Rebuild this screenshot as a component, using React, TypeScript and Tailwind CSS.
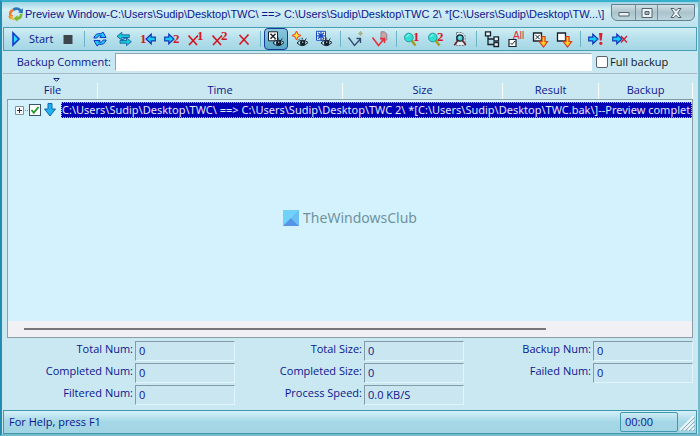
import type { ReactNode } from 'react';
import clsx from 'clsx';

interface ToolButtonProps {
  label: string;
  active?: boolean;
  children: ReactNode;
}

const ToolButton = ({ label, active, children }: ToolButtonProps) => (
  <button
    type="button"
    aria-label={label}
    aria-pressed={active}
    className={clsx(
      'flex h-[22px] w-6 shrink-0 items-center justify-center rounded-sm border',
      active ? 'border-[#123c9c] bg-linear-to-b from-[#8cc6dc] to-[#5aa9c6]' : 'border-transparent'
    )}
  >
    <svg viewBox="0 0 16 16" className="h-4 w-4 shrink-0 overflow-visible" fill="none">
      {children}
    </svg>
  </button>
);

const Separator = () => (
  <div className="flex w-2 shrink-0 justify-center">
    <div className="h-4 w-px bg-[#6db3c6]" />
  </div>
);

const RightArrow = () => (
  <path d="M.7 6.2h4.1V3.2L10 8l-5.2 4.8v-3H.7Z" fill="#19cdf5" stroke="#1239b8" strokeWidth="1.2" />
);

const LeftArrow = () => (
  <path d="M15.3 6.2h-4.1V3.2L6 8l5.2 4.8v-3h4.1Z" fill="#19cdf5" stroke="#1239b8" strokeWidth="1.2" />
);

const Digit = ({ x, y, children }: { x: number; y: number; children: string }) => (
  <text x={x} y={y} fontSize="13" fontWeight="700" fontFamily="Liberation Serif, serif" fill="#d41822">
    {children}
  </text>
);

const Cross = () => <path d="M.5 4.5 9 14M10 4.5 1 14" stroke="#cf1822" strokeWidth="1.7" />;

const Eye = () => (
  <>
    <path d="M5 12Q10 6.5 16 11.5Q10.5 17.5 5 12Z" fill="#bfe1eb" stroke="#12202d" />
    <circle cx="10.7" cy="12" r="2.7" fill="#12202d" />
    <path d="M10 11.2h1.3" stroke="#d5eef5" />
    <path d="m6 9.5 2-2M10.2 8.3V6.5M13.3 9l1-1.7" stroke="#12202d" strokeWidth=".8" />
  </>
);

const Magnifier = () => (
  <>
    <path d="m7.5 9.5 4 5" stroke="#a19b20" strokeWidth="2.4" />
    <circle cx="4.8" cy="6.5" r="4.3" fill="#31dfd0" stroke="#279ba4" />
    <path d="M2.5 6Q3.2 3.7 5.5 3.8" stroke="#b1fff1" />
  </>
);

const DownArrow = () => (
  <path d="M10 5.5h3v5h2.5L11.5 16 7.3 10.5H10Z" fill="#ffd51c" stroke="#df391b" strokeWidth="1.2" />
);

const Toolbar = () => (
  <div
    role="toolbar"
    className="flex h-6 shrink-0 items-center overflow-hidden border border-[#4a9eb4] bg-linear-to-b from-[#d0eef5] via-[#b5dfeb] via-50% to-[#a4d6e4] pl-1"
  >
    <button type="button" className="flex h-5 w-12 shrink-0 items-center gap-[5px]">
      <svg viewBox="0 0 16 16" className="h-4 w-4 shrink-0" fill="none">
        <path d="M5 2v12l6-6Z" fill="#28dcff" stroke="#1239c9" strokeWidth="1.6" />
      </svg>
      Start
    </button>
    <ToolButton label="Stop">
      <path d="M3.5 4h9v9h-9Z" fill="#3e464b" />
    </ToolButton>
    <Separator />
    <ToolButton label="Synchronize">
      <path d="M1.8 7Q3.5 1.8 9 2.7l2-1.7L14 6.5H8l1.3-1.7Q6 4 4.7 7Z" fill="#20c9f2" stroke="#1239c9" />
      <path d="M14.2 9Q12.5 14.2 7 13.3l-2 1.7L2 9.5h6l-1.3 1.7Q10 12 11.3 9Z" fill="#20c9f2" stroke="#1239c9" />
    </ToolButton>
    <ToolButton label="Compare both ways">
      <path d="M1 5.3 5.8 1.3v2.5h7.5v2.7H5.8v2.7Z" fill="#16c8cf" stroke="#1764ad" strokeWidth=".9" />
      <path d="m15.3 10.7-4.8 4v-2.5H4V9.5h6.5V6.8Z" fill="#16c8cf" stroke="#1764ad" strokeWidth=".9" />
      <path d="m5.5 9.3 5-2.8" stroke="#1764ad" strokeWidth="1.2" />
    </ToolButton>
    <ToolButton label="Copy to left">
      <LeftArrow />
      <Digit x={0} y={12}>1</Digit>
    </ToolButton>
    <ToolButton label="Copy to right">
      <RightArrow />
      <Digit x={9} y={12}>2</Digit>
    </ToolButton>
    <ToolButton label="Delete left">
      <Cross />
      <Digit x={9} y={9}>1</Digit>
    </ToolButton>
    <ToolButton label="Delete right">
      <Cross />
      <Digit x={9} y={9}>2</Digit>
    </ToolButton>
    <ToolButton label="Skip item">
      <path d="m3.5 4 9 9.5M12.5 3.5 3.5 13.5" stroke="#cf1822" strokeWidth="1.6" />
    </ToolButton>
    <Separator />
    <ToolButton label="Show unchecked" active>
      <path d="M.5.8h9v9h-9Z" fill="#fff" stroke="#17202b" />
      <path d="m2.5 2.8 5 5M7.5 2.8l-5 5" stroke="#17202b" strokeWidth="1.4" />
      <Eye />
    </ToolButton>
    <ToolButton label="Show new">
      <path d="m4.5 0 1.4 3.1L9 4.5 5.9 5.9 4.5 9 3.1 5.9 0 4.5l3.1-1.4Z" fill="#ffe13b" stroke="#ee3d17" />
      <Eye />
    </ToolButton>
    <ToolButton label="Show same">
      <path d="M.5.3h9v9h-9Z" fill="#fff" stroke="#174bc2" />
      <path d="M5 .5v8.7M.5 4.8h9M2 1.8l6 6M8 1.8l-6 6" stroke="#174bc2" strokeWidth="1.3" />
      <Eye />
    </ToolButton>
    <Separator />
    <ToolButton label="Next new">
      <path d="m.5 6.5 6 8 6-6.5M8.5 7.5h4v4.5" stroke="#314b70" strokeWidth="1.3" />
      <path d="M12.5 0v5M10 2.5h5M10.8.8l3.4 3.4M14.2.8l-3.4 3.4" stroke="#a9a67f" strokeWidth=".8" />
    </ToolButton>
    <ToolButton label="Next file">
      <path d="M9 .8h3.5l2.3 2.3V9H9Z" fill="#c9a3a8" stroke="#93838c" />
      <path d="m.5 6.5 6 8 5.5-6.5M8 7.5h4.5V12" stroke="#e92e3a" strokeWidth="1.6" />
    </ToolButton>
    <Separator />
    <ToolButton label="Find in left">
      <Magnifier />
      <Digit x={9} y={10}>1</Digit>
    </ToolButton>
    <ToolButton label="Find in right">
      <Magnifier />
      <Digit x={9} y={10}>2</Digit>
    </ToolButton>
    <ToolButton label="Find file">
      <path d="M4.5 1.5H10l3 3v10H4.5Z" fill="#e5edf0" stroke="#647c89" strokeDasharray="2 1" />
      <circle cx="8" cy="7" r="3.2" fill="#4bcdd5" stroke="#17202b" strokeWidth="1.3" />
      <path d="m5.8 9.5-3.5 4.7M10.5 9.5l3.3 4.5" stroke="#6a2228" strokeWidth="1.6" />
      <path d="M7 6.2h1.3" stroke="#e8ffff" />
    </ToolButton>
    <Separator />
    <ToolButton label="Tree view">
      <path d="M4 4.5v9h6M4 8h6" stroke="#17202b" strokeWidth="1.3" />
      <path d="M1.5.8h5v4h-5ZM10 5.8h4.5v4H10ZM10 11.5h4.5v4H10Z" fill="#e6f5f8" stroke="#17202b" strokeWidth="1.3" />
    </ToolButton>
    <ToolButton label="Check all">
      <path d="M1 8.5h7v7H1Z" fill="#fff" stroke="#17202b" strokeWidth="1.2" />
      <path d="M2.5 12 4 13.5l3-3.5" stroke="#17202b" />
      <text x="5" y="8" fontSize="10" fontFamily="Liberation Sans, sans-serif" fill="#e12631">All</text>
    </ToolButton>
    <ToolButton label="Uncheck selected">
      <path d="M1.5 2h8v8h-8Z" fill="#fff" stroke="#17202b" strokeWidth="1.3" />
      <path d="m3.3 3.8 4.5 4.5M7.8 3.8 3.3 8.3" stroke="#17202b" />
      <DownArrow />
    </ToolButton>
    <ToolButton label="Clear below">
      <path d="M1.5 2h8v8h-8Z" fill="#fff" stroke="#17202b" strokeWidth="1.3" />
      <DownArrow />
    </ToolButton>
    <Separator />
    <ToolButton label="Run now">
      <RightArrow />
      <path d="M11 2h3.5l-.8 7.5h-1.9Z" fill="#dc2030" />
      <circle cx="12.8" cy="12.3" r="1.6" fill="#dc2030" />
    </ToolButton>
    <ToolButton label="Cancel run">
      <RightArrow />
      <path d="m9 5 6 6.5M15 5l-6 6.5" stroke="#c92434" strokeWidth="1.4" />
    </ToolButton>
  </div>
);

const TitleBar = () => (
  <header className="flex h-[25px] shrink-0 items-start bg-linear-to-b from-[#9fd5e4] via-[#d4eff6] via-30% to-[#bce1ed] pr-[3px] pl-1.5">
    <svg viewBox="0 0 16 16" className="mt-1 h-4 w-4 shrink-0" fill="none">
      <path d="M1.5 10.5Q-.5 5 4.5 3l1 2.2Q3 6.5 3.5 9l2 .2-3.2 4-2.3-3Z" fill="#ef792b" />
      <path d="M4.5 2.8Q9-.5 13.5 3.5L15 2.2l-.2 5-4.8-.8 1.5-1.2Q8.5 3 6 5.2Z" fill="#2c75bd" />
      <path d="M14.5 7.5Q15 13 9.5 14v1.8L5.5 12.5l4-3.2V11Q12 10.5 11.8 7.8Z" fill="#83ba34" />
      <path d="M2 10.5Q3 14 6.5 14.5L5 12l-1-2.5Z" fill="#f4b42d" />
    </svg>
    <h1 className="mt-[3px] ml-px min-w-0 flex-1 truncate font-['Liberation_Sans',sans-serif] leading-[18px]">
      Preview Window-C:\Users\Sudip\Desktop\TWC\ ==&gt; C:\Users\Sudip\Desktop\TWC 2\ *[C:\Users\Sudip\Desktop\TW...\]
    </h1>
    <div className="mt-0.5 flex h-[17px] shrink-0 overflow-hidden rounded-b-md border border-[#62818e] bg-linear-to-b from-[#d1e0e5] via-[#abc3cc] to-[#bdd5dd]">
      <button type="button" aria-label="Minimize" className="flex w-[23px] items-center justify-center">
        <svg viewBox="0 0 12 10" className="h-2.5 w-3" fill="none">
          <path d="M1 4.5h10v3.5H1Z" fill="#edf4f7" stroke="#53636b" />
        </svg>
      </button>
      <button type="button" aria-label="Maximize" className="flex w-[23px] items-center justify-center border-x border-[#718e9a]">
        <svg viewBox="0 0 12 10" className="h-2.5 w-3" fill="none">
          <path d="M1 .5h10v9H1Z" fill="#edf4f7" stroke="#53636b" />
          <path d="M4 3.5h4v3H4Z" fill="#9db5bf" stroke="#53636b" />
        </svg>
      </button>
      <button type="button" aria-label="Close" className="flex w-9 items-center justify-center">
        <svg viewBox="0 0 12 10" className="h-2.5 w-3" fill="none">
          <path d="M1 .5h3l2 2.3L8 .5h3L7.7 5l3.3 4.5H8L6 7.2 4 9.5H1L4.3 5Z" fill="#edf4f7" stroke="#53636b" />
        </svg>
      </button>
    </div>
  </header>
);

const columns = [
  { name: 'File', width: 'w-[90px]' },
  { name: 'Time', width: '' },
  { name: 'Size', width: 'w-[160px]' },
  { name: 'Result', width: 'w-24' },
  { name: 'Backup', width: 'w-[94px]' },
];

const PreviewList = () => (
  <main className="relative mx-1 border-b border-[#8b9da6]">
    <table className="w-full table-fixed border-collapse">
      <thead>
        <tr className="h-[23px] border-b border-[#8498a3]">
          {columns.map(({ name, width }) => (
            <th
              key={name}
              className={clsx(
                width,
                'relative p-0 pt-1.5 text-center leading-4 font-normal before:absolute before:right-0 before:bottom-0 before:h-4 before:w-px before:bg-white'
              )}
            >
              {name === 'File' && (
                <svg viewBox="0 0 7 4" className="absolute top-0.5 left-1/2 h-1 w-[7px]" fill="none">
                  <path d="M.8.5h5.4L3.5 3.3Z" fill="#d8f2fc" stroke="#15227d" />
                </svg>
              )}
              {name}
            </th>
          ))}
        </tr>
      </thead>
      <tbody>
        <tr className="border-x border-[#8b9da6] bg-[#d4f2fd]">
          <td colSpan={5} className="h-[222px] overflow-hidden p-0 align-top">
            <div className="flex h-5 items-center pt-px">
              <button type="button" aria-label="Expand" className="ml-[7px] shrink-0">
                <svg viewBox="0 0 14 9" className="h-[9px] w-3.5" fill="none">
                  <path d="M.5.5h8v8h-8Z" fill="#f8fbfc" stroke="#7d929b" />
                  <path d="M2 4.5h5M4.5 2v5" stroke="#252c35" />
                  <path d="M10 4.5h4" stroke="#7d929b" strokeDasharray="1 1" />
                </svg>
              </button>
              <span className="relative flex size-3 shrink-0">
                <input
                  type="checkbox"
                  defaultChecked
                  aria-label="Include TWC"
                  className="peer size-3 appearance-none border border-[#35566d] bg-white"
                />
                <svg
                  viewBox="0 0 12 12"
                  className="pointer-events-none absolute inset-0 hidden size-3 peer-checked:block"
                  fill="none"
                >
                  <path d="m2.5 6 2.3 2.8L9.5 3" stroke="#249826" strokeWidth="1.8" />
                </svg>
              </span>
              <svg viewBox="0 0 14 14" className="mx-0.5 h-3.5 w-3.5 shrink-0" fill="none">
                <path d="M5 .5h4V6h3.5L7 13 1.5 6H5Z" fill="#1db4ed" stroke="#1264b5" />
              </svg>
              <span className="ml-0.5 h-4 min-w-0 flex-1 overflow-hidden border border-dotted border-[#d2d24c] bg-[#0000b4] font-['Noto_Sans',sans-serif] leading-[14px] whitespace-nowrap text-[#e5e7fb]">
                C:\Users\Sudip\Desktop\TWC\ ==&gt; C:\Users\Sudip\Desktop\TWC 2\ *[C:\Users\Sudip\Desktop\TWC.bak\]--Preview complet
              </span>
            </div>
          </td>
        </tr>
      </tbody>
    </table>
    <div className="flex h-4 items-center border-x border-[#8b9da6] bg-[#f1f1f5] px-4">
      <div className="h-0.5 w-4/5 bg-[#77777b]" />
    </div>
    {/* watermark */}
    <div className="pointer-events-none absolute inset-x-0 top-[134px] flex items-center justify-center gap-1 font-['Noto_Sans',sans-serif] text-sm leading-4 text-[#70929f]">
      <svg viewBox="0 0 16 16" className="size-4" fill="none">
        <path d="M0 0h16v16H0Z" fill="#62c4f4" />
        <path d="M0 0h16L0 16Z" fill="#70d2f8" />
        <path d="m8 8 8 8H0Z" fill="#5695e5" />
        <path d="m16 0v16L8 8Z" fill="#69bff1" />
      </svg>
      <span>TheWindowsClub</span>
    </div>
  </main>
);

interface Stat {
  id: string;
  label: string;
  value: string;
}

const stats: Stat[][] = [
  [
    { id: 'total-num', label: 'Total Num:', value: '0' },
    { id: 'completed-num', label: 'Completed Num:', value: '0' },
    { id: 'filtered-num', label: 'Filtered Num:', value: '0' },
  ],
  [
    { id: 'total-size', label: 'Total Size:', value: '0' },
    { id: 'completed-size', label: 'Completed Size:', value: '0' },
    { id: 'speed', label: 'Process Speed:', value: '0.0 KB/S' },
  ],
  [
    { id: 'backup-num', label: 'Backup Num:', value: '0' },
    { id: 'failed-num', label: 'Failed Num:', value: '0' },
  ],
];

const Stats = () => (
  <section className="grid h-[72px] grid-cols-3 gap-px px-1 pt-[3px]">
    {stats.map((group) => (
      <div key={group[0].id} className="flex flex-col gap-0.5">
        {group.map(({ id, label, value }) => (
          <div key={id} className="flex h-5 justify-end gap-0.5">
            <label htmlFor={id} className="leading-4">
              {label}
            </label>
            <input
              id={id}
              readOnly
              defaultValue={value}
              className="h-5 w-[100px] border border-t-[#829ba7] border-r-[#e2f5fa] border-b-[#e2f5fa] border-l-[#829ba7] bg-[#cae7f1] px-[3px] pb-0.5 leading-4"
            />
          </div>
        ))}
      </div>
    ))}
  </section>
);

const StatusBar = () => (
  <footer className="flex h-6 items-stretch border border-[#4097b0] bg-linear-to-b from-[#d5f0f8] via-[#a5d7e6] via-50% to-[#a2d5e4] pl-[5px]">
    <span className="flex-1 leading-[22px]">For Help, press F1</span>
    <time className="my-px w-[58px] rounded-xs border border-[#4097b0] pl-1 leading-[18px]">00:00</time>
    <svg viewBox="0 0 18 22" className="h-[22px] w-[18px]" fill="none">
      <path d="M2 19 16 5M6 19 16 9M10 19l6-6M14 19l2-2" stroke="#edf5f8" strokeWidth="2" />
      <path d="M3 20 17 6M7 20l10-10M11 20l6-6M15 20l2-2" stroke="#8baebb" />
    </svg>
  </footer>
);

const App = () => (
  <div className="flex min-h-screen flex-col border-2 border-t-[#37b0ce] border-r-[#75b9ca] border-b-[#75b9ca] border-l-[#238caf] bg-[#cae8f2] font-['Open_Sans',sans-serif] text-[11px] text-[#0a1690]">
    <TitleBar />
    <div className="mx-px flex flex-1 flex-col">
      <Toolbar />
      <div className="flex h-[23px] shrink-0 items-center border-b border-[#a8b9c3] pr-7">
        <label htmlFor="comment" className="w-[112px] shrink-0 pr-1 text-right">
          Backup Comment:
        </label>
        <input
          id="comment"
          className="h-[18px] min-w-0 flex-1 border border-t-[#8ea6b1] border-r-white border-b-white border-l-[#8ea6b1] bg-white px-1"
        />
        <label className="ml-1 flex w-[73px] shrink-0 items-center gap-0.5 whitespace-nowrap text-[#101923]">
          <input
            type="checkbox"
            className="size-3 appearance-none rounded-xs border border-[#56636b] bg-white checked:bg-[#2563a8]"
          />
          Full backup
        </label>
      </div>
      <div className="pt-0.5">
        <PreviewList />
      </div>
      <Stats />
      <StatusBar />
    </div>
  </div>
);

export default App;
